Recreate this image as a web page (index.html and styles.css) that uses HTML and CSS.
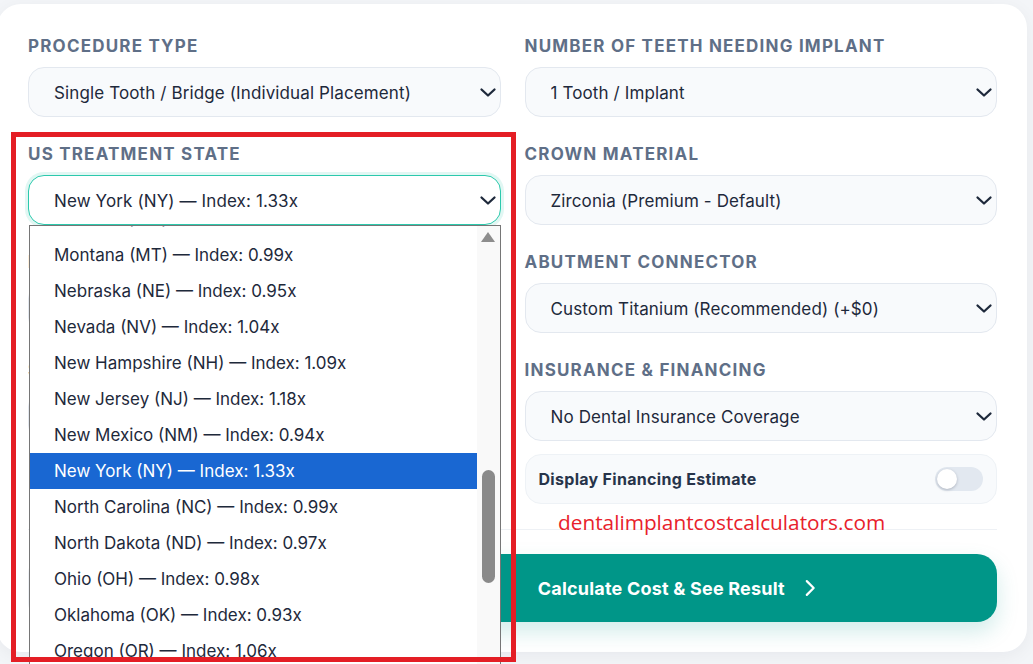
FILE: index.html
```html
<!DOCTYPE html>
<html>
<head>
  <title>Dental Implant Cost Calculator</title>
  <link rel="stylesheet" href="styles.css">
</head>
<body>
  <div class="calc-card">
    <form id="calcForm">
      <div class="form-grid">
        <div class="form-col">
          <div class="form-group">
            <label for="procedure">Procedure Type</label>
            <div class="select-wrap">
              <select id="procedure">
                <option>Single Tooth / Bridge (Individual Placement)</option>
                <option>All-on-4 Full Arch</option>
              </select>
              <svg class="chev" viewBox="0 0 24 24"><path d="M5.5 9.5L12 15.5L18.5 9.5"/></svg>
            </div>
          </div>
          <div class="form-group">
            <label for="state">US Treatment State</label>
            <div class="select-wrap open">
              <select id="state" class="focused">
                <option>New York (NY) — Index: 1.33x</option>
              </select>
              <svg class="chev" viewBox="0 0 24 24"><path d="M5.5 9.5L12 15.5L18.5 9.5"/></svg>

              <!-- open option list of the state picker -->
              <div class="option-list">
                <div class="options">
                  <div class="option first">Missouri (MO) — Index: 0.96x</div>
                  <div class="option">Montana (MT) — Index: 0.99x</div>
                  <div class="option">Nebraska (NE) — Index: 0.95x</div>
                  <div class="option">Nevada (NV) — Index: 1.04x</div>
                  <div class="option">New Hampshire (NH) — Index: 1.09x</div>
                  <div class="option">New Jersey (NJ) — Index: 1.18x</div>
                  <div class="option">New Mexico (NM) — Index: 0.94x</div>
                  <div class="option selected">New York (NY) — Index: 1.33x</div>
                  <div class="option">North Carolina (NC) — Index: 0.99x</div>
                  <div class="option">North Dakota (ND) — Index: 0.97x</div>
                  <div class="option">Ohio (OH) — Index: 0.98x</div>
                  <div class="option">Oklahoma (OK) — Index: 0.93x</div>
                  <div class="option">Oregon (OR) — Index: 1.06x</div>
                  <div class="option">Pennsylvania (PA) — Index: 1.08x</div>
                </div>
                <div class="scroll-track">
                  <span class="scroll-up"></span>
                  <span class="scroll-thumb"></span>
                </div>
              </div>
            </div>
          </div>
          <div class="form-group">
            <label for="graft">Bone Grafting</label>
            <div class="select-wrap">
              <select id="graft">
                <option>No Bone Graft Needed</option>
              </select>
            </div>
          </div>
          <div class="form-group">
            <label for="sedation">Sedation Type</label>
            <div class="select-wrap">
              <select id="sedation">
                <option>Local Anesthesia Only</option>
              </select>
            </div>
          </div>
        </div>

        <div class="form-col">
          <div class="form-group">
            <label for="teeth">Number of Teeth Needing Implant</label>
            <div class="select-wrap">
              <select id="teeth">
                <option>1 Tooth / Implant</option>
                <option>2 Teeth / Implants</option>
              </select>
              <svg class="chev" viewBox="0 0 24 24"><path d="M5.5 9.5L12 15.5L18.5 9.5"/></svg>
            </div>
          </div>
          <div class="form-group">
            <label for="crown">Crown Material</label>
            <div class="select-wrap">
              <select id="crown">
                <option>Zirconia (Premium - Default)</option>
                <option>Porcelain Fused to Metal</option>
              </select>
              <svg class="chev" viewBox="0 0 24 24"><path d="M5.5 9.5L12 15.5L18.5 9.5"/></svg>
            </div>
          </div>
          <div class="form-group">
            <label for="abutment">Abutment Connector</label>
            <div class="select-wrap">
              <select id="abutment">
                <option>Custom Titanium (Recommended) (+$0)</option>
                <option>Stock Titanium</option>
              </select>
              <svg class="chev" viewBox="0 0 24 24"><path d="M5.5 9.5L12 15.5L18.5 9.5"/></svg>
            </div>
          </div>
          <div class="form-group">
            <label for="insurance">Insurance &amp; Financing</label>
            <div class="select-wrap">
              <select id="insurance">
                <option>No Dental Insurance Coverage</option>
                <option>PPO Dental Plan</option>
              </select>
              <svg class="chev" viewBox="0 0 24 24"><path d="M5.5 9.5L12 15.5L18.5 9.5"/></svg>
            </div>
            <div class="toggle-row">
              <span>Display Financing Estimate</span>
              <label class="switch">
                <input type="checkbox" id="financing">
                <span class="knob"></span>
              </label>
            </div>
          </div>
        </div>
      </div>

      <div class="actions">
        <button type="reset" class="btn-reset">Reset</button>
        <button type="button" class="btn-calc">
          Calculate Cost &amp; See Result
          <svg viewBox="0 0 24 24"><path d="M8.5 4.5L16 12L8.5 19.5"/></svg>
        </button>
      </div>
    </form>
  </div>

  <div class="watermark">dentalimplantcostcalculators.com</div>
  <div class="highlight"></div>
</body>
</html>
```

FILE: styles.css
```css
html, body {
  height: 100%;
  overflow: hidden;
}
body {
  margin: 0;
  background: #f3f5f8;
  font-family: Inter, "Noto Sans", sans-serif;
  color: #1e293b;
}
.calc-card {
  margin: 4px 6px 0 -3px;
  padding: 31px 30px 30px 31px;
  background: #fff;
  border-radius: 24px;
  box-shadow: 0 4px 18px rgba(15, 23, 42, 0.05);
}
.form-grid {
  display: grid;
  grid-template-columns: 1fr 1fr;
  column-gap: 24px;
}
.form-group {
  margin-bottom: 26px;
}
.form-group:last-child {
  margin-bottom: 0;
}
.form-group > label {
  display: block;
  font-size: 17px;
  line-height: 22px;
  font-weight: 700;
  letter-spacing: 1.2px;
  text-transform: uppercase;
  color: #5f6f87;
  margin-bottom: 10px;
}
.select-wrap {
  position: relative;
}
.select-wrap select {
  appearance: none;
  -webkit-appearance: none;
  display: block;
  width: 100%;
  height: 50px;
  padding: 1px 44px 0 25px;
  font-family: inherit;
  font-size: 17px;
  letter-spacing: 0.12px;
  color: #1e293b;
  background: #f8fafc;
  border: 1px solid #e3e8ef;
  border-radius: 16px;
  outline: none;
}
.select-wrap select.focused {
  background: #fff;
  border-color: #2cc9ad;
  box-shadow: 0 0 0 3px rgba(44, 201, 173, 0.14);
}
.chev {
  position: absolute;
  right: 1px;
  top: 13px;
  width: 24px;
  height: 24px;
  fill: none;
  stroke: #1e293b;
  stroke-width: 2.3;
  stroke-linecap: round;
  stroke-linejoin: round;
  pointer-events: none;
}

/* open state list */
.option-list {
  position: absolute;
  top: 50px;
  left: 1px;
  right: 0;
  height: 480px;
  display: flex;
  background: #fff;
  border: 1px solid #767676;
  z-index: 5;
}
.options {
  flex: 1;
  overflow: hidden;
}
.option {
  height: 36px;
  line-height: 36px;
  padding-left: 24px;
  font-size: 17px;
  color: #1e293b;
  white-space: nowrap;
}
.option.first {
  margin-top: -25px;
}
.option.selected {
  background: #1967d2;
  color: #fff;
}
.scroll-track {
  position: relative;
  width: 23px;
  background: #f9f9f9;
}
.scroll-up {
  position: absolute;
  top: 6px;
  left: 4px;
  width: 0;
  height: 0;
  border-left: 7.5px solid transparent;
  border-right: 7.5px solid transparent;
  border-bottom: 10px solid #8d8d8d;
}
.scroll-thumb {
  position: absolute;
  top: 244px;
  left: 5px;
  width: 13px;
  height: 113px;
  border-radius: 7px;
  background: #8a8a8a;
}

/* financing toggle */
.toggle-row {
  margin-top: 13px;
  height: 50px;
  box-sizing: border-box;
  padding: 0 13px 0 13px;
  display: flex;
  align-items: center;
  justify-content: space-between;
  background: #f8fafc;
  border: 1px solid #eef2f6;
  border-radius: 16px;
  font-size: 16px;
  letter-spacing: 0.3px;
  font-weight: 700;
  color: #27344a;
}
.switch {
  position: relative;
  width: 48px;
  height: 24px;
  border-radius: 12px;
  background: #e2e8f0;
}
.switch input {
  display: none;
}
.knob {
  position: absolute;
  top: 2px;
  left: 2px;
  width: 20px;
  height: 20px;
  border-radius: 50%;
  background: #fff;
  box-shadow: 0 1px 3px rgba(15, 23, 42, 0.25);
}

/* buttons */
.actions {
  margin-top: 25px;
  padding-top: 24px;
  border-top: 1px solid #eef1f5;
  display: grid;
  grid-template-columns: 1fr 2fr;
  gap: 16px;
}
.actions button {
  height: 68px;
  border-radius: 20px;
  font-family: inherit;
  font-size: 18px;
  font-weight: 700;
  cursor: pointer;
}
.btn-reset {
  background: #fff;
  border: 1px solid #eef1f5;
  color: #64748b;
}
.btn-calc {
  display: flex;
  align-items: center;
  justify-content: center;
  gap: 14px;
  border: none;
  background: #009688;
  color: #fff;
  letter-spacing: 0.2px;
  box-shadow: 0 10px 22px rgba(0, 150, 136, 0.18);
}
.btn-calc svg {
  width: 22px;
  height: 22px;
  fill: none;
  stroke: #fff;
  stroke-width: 2.4;
  stroke-linecap: round;
  stroke-linejoin: round;
}

/* site mark and highlight frame drawn over the form */
.watermark {
  position: absolute;
  left: 558px;
  top: 508px;
  font-family: "Open Sans", sans-serif;
  font-size: 20.8px;
  color: #e8212b;
  z-index: 6;
}
.highlight {
  position: absolute;
  left: 11px;
  top: 132px;
  width: 495px;
  height: 520px;
  border: 5px solid #e41e25;
  z-index: 7;
}
```
